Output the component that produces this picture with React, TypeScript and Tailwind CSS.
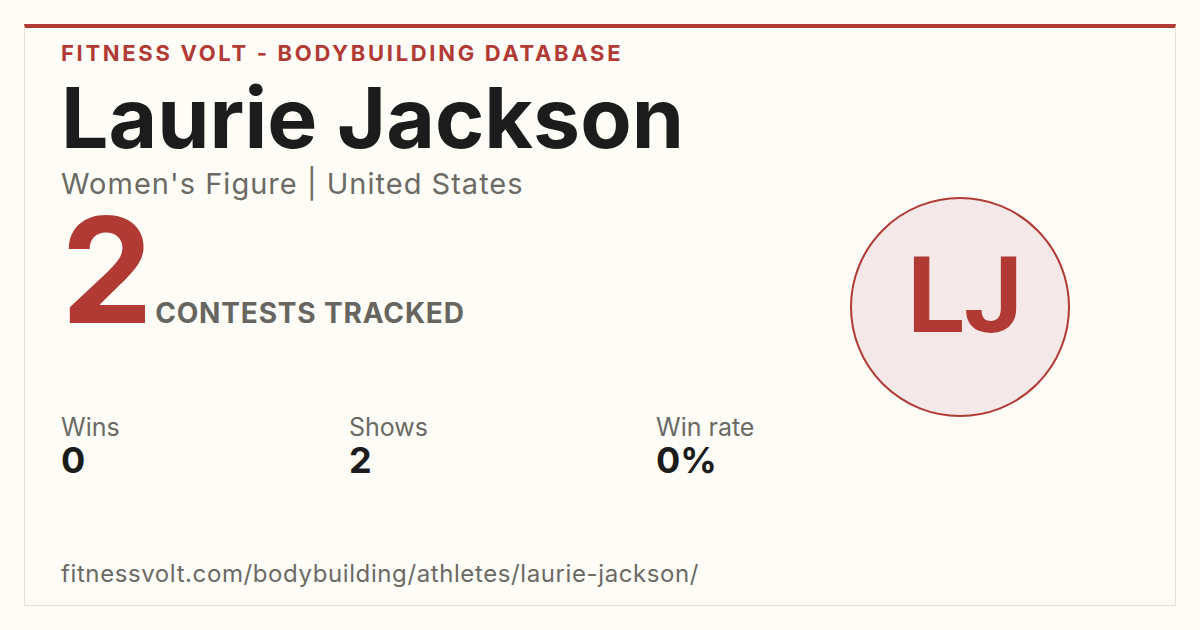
import React from 'react';

const stats = [
  { label: 'Wins', value: '0', width: 'w-[288px]' },
  { label: 'Shows', value: '2', width: 'w-[307px]' },
  { label: 'Win rate', value: '0%', width: 'w-[140px]' },
];

const App: React.FC = () => {
  return (
    <div
      className="w-[1200px] h-[630px] bg-[#fdfcf7] p-6"
      style={{ fontFamily: 'Inter, "Noto Sans", sans-serif' }}
    >
      <div className="h-full border border-[#e4e1da] border-t-4 border-t-[#b13a35] flex pl-9 pr-[105px]">
        <div className="flex-1 flex flex-col">
          <div className="mt-[10px] text-[22px] leading-[30px] font-bold tracking-[0.122em] text-[#b13a35]">
            FITNESS VOLT - BODYBUILDING DATABASE
          </div>
          <h1 className="mt-[8px] text-[84px] leading-[84px] font-bold tracking-normal text-[#1c1c1c]">
            Laurie Jackson
          </h1>
          <div className="mt-[6px] text-[29px] leading-[36px] tracking-[0.035em] text-[#6b6a65]">
            Women's Figure | United States
          </div>
          <div className="mt-[13px] flex items-baseline gap-[8px]">
            <span className="text-[146px] leading-[110px] font-bold text-[#b13a35] tracking-[-0.04em]">
              2
            </span>
            <span className="text-[28px] leading-[34px] font-bold tracking-[0.03em] text-[#666560]">
              CONTESTS TRACKED
            </span>
          </div>
          <div className="mt-[82px] flex">
            {stats.map((s) => (
              <div key={s.label} className={`${s.width} flex flex-col`}>
                <span className="text-[25px] leading-[30px] text-[#6b6a65]">{s.label}</span>
                <span className="text-[36px] leading-[36px] font-bold text-[#1c1c1c]">{s.value}</span>
              </div>
            ))}
          </div>
          <div className="mt-auto mb-[16px] text-[24px] leading-[30px] tracking-[0.025em] text-[#6b6a65]">
            fitnessvolt.com/bodybuilding/athletes/laurie-jackson/
          </div>
        </div>
        <div className="flex items-center pb-[20px]">
          <div className="w-[220px] h-[220px] rounded-full border-2 border-[#b13a35] bg-[#f4e8e8] flex items-center justify-center pl-[10px] pb-[20px]">
            <span
              className="text-[105px] font-bold text-[#b13a35] leading-none"
              style={{ fontFamily: 'Roboto, sans-serif' }}
            >
              LJ
            </span>
          </div>
        </div>
      </div>
    </div>
  );
};

export default App;
